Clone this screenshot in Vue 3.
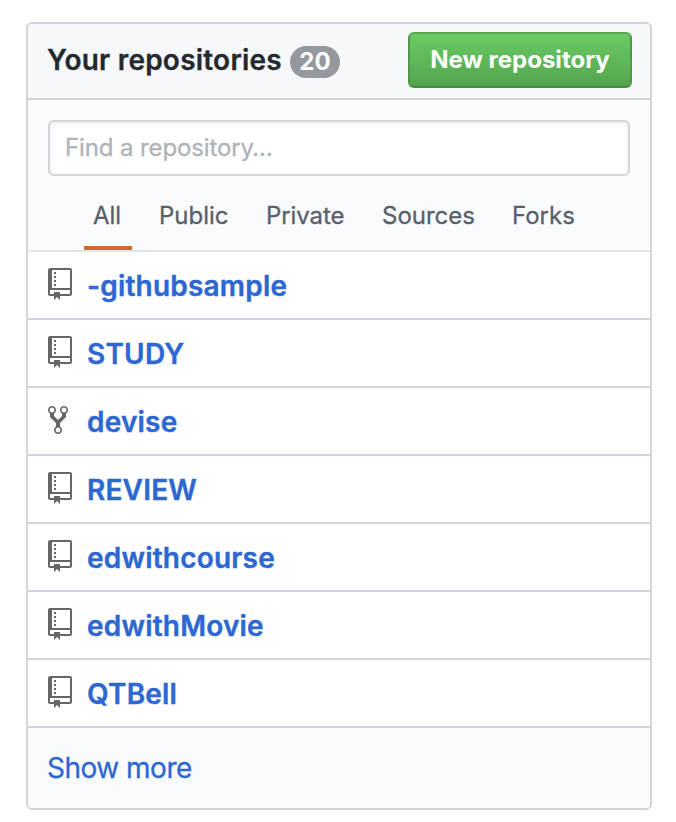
<script setup>
import { ref } from 'vue'

const icons = {
  repo: {
    width: 12,
    path: 'M4 9H3V8h1v1zm0-3H3v1h1V6zm0-2H3v1h1V4zm0-2H3v1h1V2zm8-1v12c0 .55-.45 1-1 1H6v2l-1.5-1.5L3 16v-2H1c-.55 0-1-.45-1-1V1c0-.55.45-1 1-1h10c.55 0 1 .45 1 1zm-1 10H1v2h2v-1h3v1h5v-2zm0-10H2v9h9V1z',
  },
  fork: {
    width: 10,
    path: 'M8 1a1.993 1.993 0 0 0-1 3.72V6L5 8 3 6V4.72A1.993 1.993 0 0 0 2 1a1.993 1.993 0 0 0-1 3.72V6.5l3 3v1.78A1.993 1.993 0 0 0 5 15a1.993 1.993 0 0 0 1-3.72V9.5l3-3V4.72A1.993 1.993 0 0 0 8 1zM2 4.2C1.34 4.2.8 3.65.8 3c0-.65.55-1.2 1.2-1.2.65 0 1.2.55 1.2 1.2 0 .65-.55 1.2-1.2 1.2zm3 10c-.66 0-1.2-.55-1.2-1.2 0-.65.55-1.2 1.2-1.2.65 0 1.2.55 1.2 1.2 0 .65-.55 1.2-1.2 1.2zm3-10c-.66 0-1.2-.55-1.2-1.2 0-.65.55-1.2 1.2-1.2.65 0 1.2.55 1.2 1.2 0 .65-.55 1.2-1.2 1.2z',
  },
}

const tabs = ['All', 'Public', 'Private', 'Sources', 'Forks']
const activeTab = ref('All')

const repos = [
  { name: '-githubsample', icon: 'repo' },
  { name: 'STUDY', icon: 'repo' },
  { name: 'devise', icon: 'fork' },
  { name: 'REVIEW', icon: 'repo' },
  { name: 'edwithcourse', icon: 'repo' },
  { name: 'edwithMovie', icon: 'repo' },
  { name: 'QTBell', icon: 'repo' },
]
</script>

<template>
  <section class="box">
    <header class="head">
      <h3 class="title">Your repositories</h3>
      <span class="counter">20</span>
      <button class="new" type="button">New repository</button>
    </header>
    <div class="filter">
      <input class="search" type="text" placeholder="Find a repository…" />
      <nav class="tabs">
        <button
          v-for="tab in tabs"
          :key="tab"
          type="button"
          class="tab"
          :class="[tab.toLowerCase(), { active: tab === activeTab }]"
          @click="activeTab = tab"
        >{{ tab }}</button>
      </nav>
    </div>
    <ul class="list">
      <li v-for="repo in repos" :key="repo.name" class="row">
        <span class="icon">
          <svg
            :width="icons[repo.icon].width * 2"
            height="32"
            :viewBox="`0 0 ${icons[repo.icon].width} 16`"
          ><path fill-rule="evenodd" :d="icons[repo.icon].path" /></svg>
        </span>
        <a class="name">{{ repo.name }}</a>
      </li>
    </ul>
    <footer class="more"><a>Show more</a></footer>
  </section>
</template>

<style>
body {
  background: #fff;
}
</style>

<style scoped>
.box {
  box-sizing: border-box;
  width: 626px;
  height: 788px;
  margin: 22px 0 0 26px;
  border: 2px solid #d1d5da;
  border-radius: 6px;
  overflow: hidden;
  background: #fff;
  font-family: Inter, "Liberation Sans", sans-serif;
  color: #24292e;
}
.head {
  box-sizing: border-box;
  height: 76px;
  display: flex;
  align-items: center;
  padding: 0 18px 2px 19px;
  background: #f6f8fa;
  border-bottom: 2px solid #d1d5da;
}
.title {
  margin: 0;
  font-size: 28px;
  font-weight: 600;
  letter-spacing: 0.22px;
  line-height: 42px;
  white-space: nowrap;
  -webkit-text-stroke: 0.3px;
}
.counter {
  height: 32px;
  width: 50px;
  margin: 4px 0 0 8px;
  border-radius: 16px;
  background: #95989d;
  color: #fff;
  font-size: 24px;
  font-weight: 700;
  line-height: 31px;
  text-align: center;
}
.new {
  box-sizing: border-box;
  width: 224px;
  height: 56px;
  margin-left: auto;
  padding: 0;
  border: 2px solid;
  border-color: #5aa951 #4f9848 #498e43;
  border-radius: 6px;
  background: linear-gradient(#6acb64, #54a44e);
  color: #fff;
  font: 700 24px/50px Inter, "Liberation Sans", sans-serif;
  white-space: nowrap;
}
.filter {
  box-sizing: border-box;
  height: 152px;
  padding: 20px 20px 0;
  background: #fafbfd;
  border-bottom: 2px solid #e1e4e8;
}
.search {
  display: block;
  box-sizing: border-box;
  width: 582px;
  height: 56px;
  padding: 0 15px 2px;
  border: 2px solid #d1d5da;
  border-radius: 6px;
  background: #fff;
  box-shadow: inset 0 2px 4px rgba(27, 31, 35, 0.075);
  font: 400 24px/40px Inter, "Liberation Sans", sans-serif;
  letter-spacing: -0.12px;
  -webkit-text-stroke: 0.3px;
}
.search::placeholder {
  color: #afb2b9;
  opacity: 1;
}
.tabs {
  display: flex;
  gap: 18px;
  padding-left: 36px;
}
.tab {
  box-sizing: border-box;
  height: 74px;
  padding: 10px 0 0 9px;
  border: 0;
  border-bottom: 4px solid transparent;
  background: none;
  color: #586069;
  font: 400 24px/60px Inter, "Liberation Sans", sans-serif;
  text-align: left;
  white-space: nowrap;
  -webkit-text-stroke: 0.3px;
}
.tab.active {
  border-bottom-color: #d26a2e;
}
.all { width: 48px; }
.public { width: 89px; }
.private { width: 98px; letter-spacing: -0.1px; }
.sources { width: 112px; }
.forks { width: 82px; }
.list {
  margin: 0;
  padding: 0;
  list-style: none;
}
.row {
  box-sizing: border-box;
  height: 68px;
  display: flex;
  padding: 16px 20px 0;
  border-bottom: 2px solid #d1d5da;
}
.icon {
  width: 39px;
  height: 32px;
}
.icon svg {
  display: block;
  fill: #666;
}
.name {
  color: #2c67d2;
  font-size: 28px;
  font-weight: 600;
  letter-spacing: 0.2px;
  line-height: 36px;
  -webkit-text-stroke: 0.4px;
}
.more {
  height: 80px;
  padding: 0 19px;
  background: #fafbfd;
  color: #2c67d2;
  font-size: 28px;
  letter-spacing: -0.5px;
  line-height: 81px;
  -webkit-text-stroke: 0.3px;
}
</style>
